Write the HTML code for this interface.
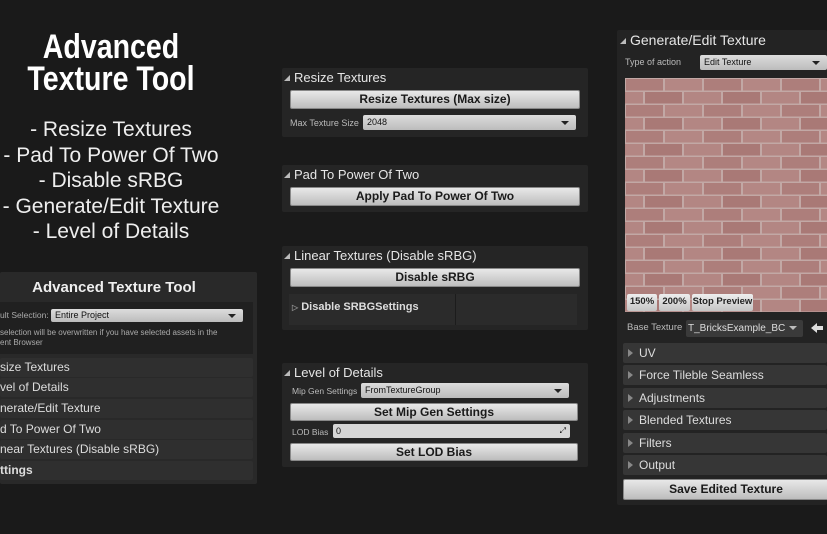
<!DOCTYPE html><html><head><style>
*{margin:0;padding:0;box-sizing:border-box}
body{width:827px;height:534px;background:#1a1a1a;overflow:hidden;position:relative;font-family:"Liberation Sans",sans-serif;color:#ddd}
.a{position:absolute}
.big{left:0;width:222px;text-align:center;color:#fff;font-weight:bold;font-size:34px;line-height:32px;transform:scaleX(.84);transform-origin:111px 0}
.feat{left:0;width:222px;text-align:center;color:#eee;font-size:21px;line-height:25.5px;white-space:nowrap}
.pnl{background:#252525;border-radius:2px}
.btn{position:absolute;background:linear-gradient(#e8e8e8,#bdbdbd);color:#1a1a1a;font-weight:bold;font-size:12px;text-align:center;border-radius:2px;border:1px solid #888;white-space:nowrap}
.dd{position:absolute;background:linear-gradient(#dcdcdc,#bcbcbc);color:#111;font-size:9px;padding-left:4px;border-radius:2px}
.dd:after{content:"";position:absolute;right:7px;top:50%;margin-top:-2px;border:4px solid transparent;border-top:4px solid #222;border-bottom:0}
.hd{position:absolute;font-size:13px;color:#e6e6e6}
.hd:before{content:"";display:inline-block;border-left:6px solid transparent;border-bottom:6px solid #bbb;margin-right:4px;vertical-align:1px}
.lb{position:absolute;font-size:9px;color:#bbb;white-space:nowrap}
.row{position:absolute;left:0;width:253px;height:19px;background:#2f2f2f;border-radius:2px;font-size:12px;color:#ddd;line-height:19px}
.cr{position:absolute;left:623px;width:204px;height:20px;background:#363636;border-radius:2px;font-size:12px;color:#ddd;line-height:20px;padding-left:16px}
.cr:before{content:"";position:absolute;left:5px;top:6px;border-top:4px solid transparent;border-bottom:4px solid transparent;border-left:5px solid #888}
.sb{position:absolute;top:294px;height:17px;background:linear-gradient(#eee,#c4c4c4);color:#222;font-size:9.5px;font-weight:bold;line-height:16px;text-align:center;border-radius:2px;white-space:nowrap}
</style></head><body>
<div class="a big" style="top:31px">Advanced<br>Texture Tool</div>
<div class="a feat" style="top:117px">- Resize Textures<br>- Pad To Power Of Two<br>- Disable sRBG<br>- Generate/Edit Texture<br>- Level of Details</div>

<div class="a pnl" style="left:0;top:272px;width:257px;height:212px;background:#292929">
<div class="a" style="left:0;width:228px;top:7px;text-align:center;font-weight:bold;font-size:15px;color:#eee">Advanced Texture Tool</div>
<div class="a" style="left:0;top:30px;width:253px;height:52px;background:#202020"></div>
<div class="lb" style="left:0;top:38px;color:#aaa;font-size:8.5px">ult Selection:</div>
<div class="dd" style="left:51px;top:37px;width:192px;height:13px;line-height:13px">Entire Project</div>
<div class="lb" style="left:0;top:56px;font-size:8px;line-height:10px;color:#aaa">selection will be overwritten if you have selected assets in the<br>ent Browser</div>
<div class="row" style="top:86px">size Textures</div>
<div class="row" style="top:106px">vel of Details</div>
<div class="row" style="top:127px">nerate/Edit Texture</div>
<div class="row" style="top:148px">d To Power Of Two</div>
<div class="row" style="top:168px">near Textures (Disable sRBG)</div>
<div class="row" style="top:189px;font-weight:bold">ttings</div>
</div>

<div class="a pnl" style="left:282px;top:68px;width:306px;height:69px"></div>
<div class="hd" style="left:284px;top:70px">Resize Textures</div>
<div class="btn" style="left:290px;top:90px;width:290px;height:19px;line-height:17px">Resize Textures (Max size)</div>
<div class="lb" style="left:290px;top:118px">Max Texture Size</div>
<div class="dd" style="left:363px;top:115px;width:213px;height:15px;line-height:15px">2048</div>

<div class="a pnl" style="left:282px;top:165px;width:306px;height:47px"></div>
<div class="hd" style="left:284px;top:167px">Pad To Power Of Two</div>
<div class="btn" style="left:290px;top:187px;width:290px;height:19px;line-height:17px">Apply Pad To Power Of Two</div>

<div class="a pnl" style="left:282px;top:246px;width:306px;height:84px"></div>
<div class="hd" style="left:284px;top:248px">Linear Textures (Disable sRBG)</div>
<div class="btn" style="left:290px;top:268px;width:290px;height:19px;line-height:17px">Disable sRBG</div>
<div class="a" style="left:289px;top:294px;width:288px;height:31px;background:#2b2b2b"></div>
<div class="a" style="left:455px;top:294px;width:1px;height:31px;background:#1c1c1c"></div>
<div class="a" style="left:292px;top:301px;font-size:11px;font-weight:bold;color:#ddd"><span style="color:#888;font-size:8px">▷</span> Disable SRBGSettings</div>

<div class="a pnl" style="left:282px;top:363px;width:306px;height:104px"></div>
<div class="hd" style="left:284px;top:365px">Level of Details</div>
<div class="lb" style="left:292px;top:386px;font-size:8.5px">Mip Gen Settings</div>
<div class="dd" style="left:361px;top:383px;width:208px;height:15px;line-height:15px">FromTextureGroup</div>
<div class="btn" style="left:290px;top:403px;width:288px;height:18px;line-height:16px">Set Mip Gen Settings</div>
<div class="lb" style="left:292px;top:427px;font-size:8.5px">LOD Bias</div>
<div class="a" style="left:333px;top:424px;width:237px;height:14px;background:#d6d6d6;color:#111;font-size:9px;padding-left:3px;line-height:14px;border-radius:2px">0<span style="position:absolute;right:4px;font-size:8px">⤢</span></div>
<div class="btn" style="left:290px;top:443px;width:288px;height:18px;line-height:16px">Set LOD Bias</div>

<div class="a pnl" style="left:617px;top:30px;width:210px;height:475px;background:#232323"></div>
<div class="hd" style="left:620px;top:32px;font-size:14px">Generate/Edit Texture</div>
<div class="lb" style="left:625px;top:57px">Type of action</div>
<div class="dd" style="left:700px;top:55px;width:127px;height:15px;line-height:15px">Edit Texture</div>
<svg class="a" style="left:625px;top:78px" width="202" height="234">
<defs><pattern id="b" width="78" height="26" patternUnits="userSpaceOnUse">
<rect width="78" height="26" fill="#c2a8a5"/>
<rect x="1" y="1" width="37" height="11.5" fill="#ad7e7b"/><rect x="40" y="1" width="37" height="11.5" fill="#b48784"/>
<rect x="-19" y="14" width="37" height="11.5" fill="#b38683"/><rect x="20" y="14" width="37" height="11.5" fill="#a97976"/><rect x="59" y="14" width="37" height="11.5" fill="#b38683"/>
</pattern></defs>
<rect width="202" height="234" fill="url(#b)"/></svg>
<div class="sb" style="left:627px;width:30px">150%</div>
<div class="sb" style="left:659px;width:31px">200%</div>
<div class="sb" style="left:692px;width:61px">Stop Preview</div>
<div class="lb" style="left:627px;top:322px;font-size:9.5px">Base Texture</div>
<div class="a" style="left:686px;top:320px;width:117px;height:17px;background:#3a3a3a;border-radius:2px;font-size:10px;color:#ddd;line-height:17px;padding-left:2px;white-space:nowrap">T_BricksExample_BC<span style="position:absolute;right:6px;top:6px;border:4px solid transparent;border-top:4px solid #bbb;border-bottom:0"></span></div>
<svg class="a" style="left:810px;top:322px" width="14" height="12"><path d="M1 6 L7 1 L7 4 L13 4 L13 8 L7 8 L7 11 Z" fill="#ddd"/></svg>
<div class="cr" style="top:343px">UV</div>
<div class="cr" style="top:365px">Force Tileble Seamless</div>
<div class="cr" style="top:388px">Adjustments</div>
<div class="cr" style="top:410px">Blended Textures</div>
<div class="cr" style="top:433px">Filters</div>
<div class="cr" style="top:455px">Output</div>
<div class="btn" style="left:623px;top:479px;width:206px;height:21px;line-height:19px">Save Edited Texture</div>
</body></html>
